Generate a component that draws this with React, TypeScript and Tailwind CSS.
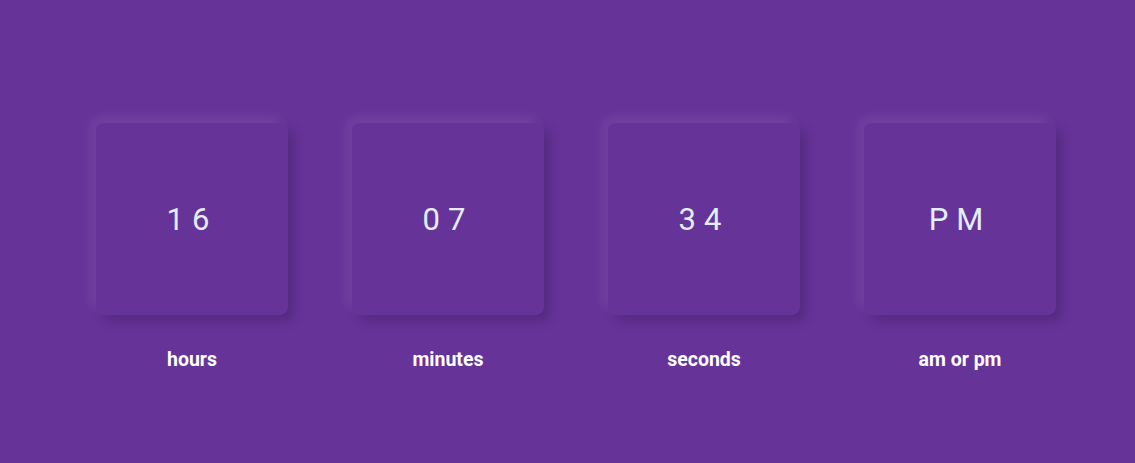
const units = [
  { value: "16", label: "hours" },
  { value: "07", label: "minutes" },
  { value: "34", label: "seconds" },
  { value: "PM", label: "am or pm" },
];

export default function App() {
  return (
    <main className="w-full h-[463px] bg-[#663399] font-['Roboto',sans-serif] overflow-hidden">
      <div className="flex gap-16 pl-[96px] pt-[123px]">
        {units.map((u) => (
          <div key={u.label} className="flex flex-col items-center w-[192px]">
            <div className="w-[192px] h-[192px] rounded-lg bg-[#663399] shadow-[-6px_-6px_12px_rgba(255,255,255,0.08),6px_6px_12px_rgba(0,0,0,0.18)] flex items-center justify-center">
              <span className="text-[31px] font-normal tracking-[8px] text-[#e3eeff] leading-none">
                {u.value}
              </span>
            </div>
            <p className="mt-[33px] text-[19.5px] font-bold text-white leading-[24px]">{u.label}</p>
          </div>
        ))}
      </div>
    </main>
  );
}
